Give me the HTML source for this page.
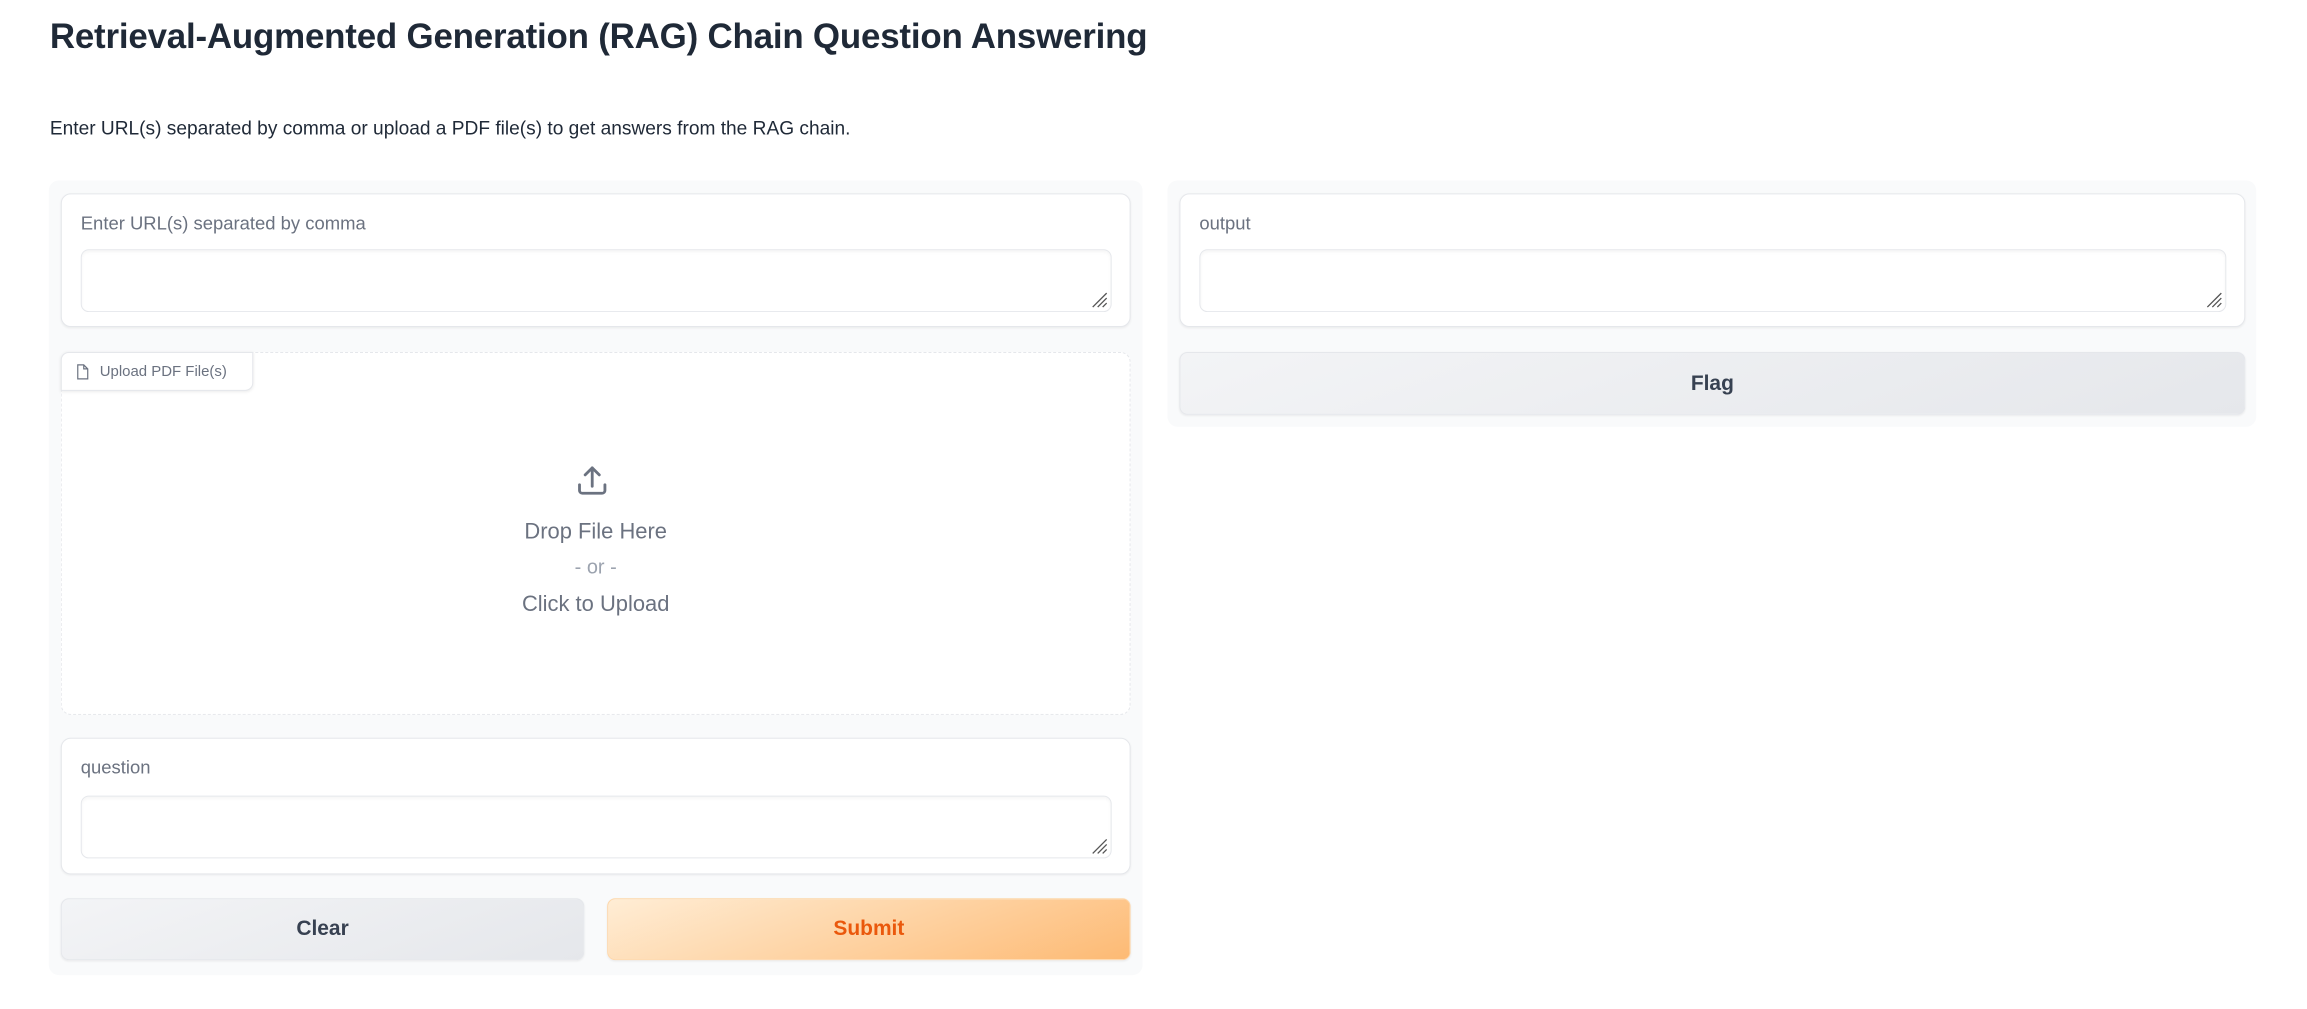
<!DOCTYPE html>
<html><head><meta charset="utf-8"><style>
*{box-sizing:border-box;margin:0;padding:0}
body{width:2307px;height:1009px;background:#fff;font-family:"Liberation Sans",sans-serif;position:relative;overflow:hidden}
#w{position:absolute;left:0;top:0;width:2307px;height:1009px;transform:scale(0.997);transform-origin:0 0}
.abs{position:absolute}
h1{position:absolute;left:50px;top:17px;font-size:35px;font-weight:bold;color:#1f2937;letter-spacing:-0.2px}
.desc{left:50px;top:119px;font-size:19.2px;color:#1f2937}
.panel{background:#f9fafb;border-radius:10px}
.block{background:#fff;border:1.5px solid #e5e7eb;border-radius:10px;box-shadow:0 1px 2px rgba(0,0,0,.05)}
.label{font-size:18.5px;color:#6b7280}
.ta{background:#fff;border:1.5px solid #e5e7eb;border-radius:8px;box-shadow:inset 0 2px 3px rgba(0,0,0,.04)}
.grip{position:absolute;right:3px;bottom:3px;width:18px;height:18px}
.btn{display:flex;align-items:center;justify-content:center;font-size:21px;font-weight:bold;border-radius:8px}
.sec{background:linear-gradient(160deg,#f3f4f6,#e5e7eb);color:#374151;border:1px solid #e5e7eb;box-shadow:0 1px 2px rgba(0,0,0,.06)}
.pri{background:linear-gradient(160deg,#ffedd5,#fdba74);color:#ea580c;border:1px solid #fed7aa;box-shadow:0 1px 2px rgba(0,0,0,.06)}
</style></head><body><div id="w">
<h1>Retrieval-Augmented Generation (RAG) Chain Question Answering</h1>
<div class="abs desc">Enter URL(s) separated by comma or upload a PDF file(s) to get answers from the RAG chain.</div>

<div class="abs panel" style="left:49px;top:181px;width:1097px;height:797px"></div>
<div class="abs block" style="left:61px;top:194px;width:1073px;height:134px"></div>
<div class="abs label" style="left:81px;top:213px">Enter URL(s) separated by comma</div>
<div class="abs ta" style="left:81px;top:250px;width:1034px;height:63px"><svg class="grip" viewBox="0 0 18 18"><path d="M17 3L3 17M17 8L8 17M17 13L13 17" stroke="#555" stroke-width="1.3"/></svg></div>

<div class="abs" style="left:61px;top:353px;width:1073px;height:364px;background:#fff;border:1.5px dashed #e5e7eb;border-radius:10px"></div>
<div class="abs" style="left:61px;top:353px;width:193px;height:39px;background:#fff;border:1px solid #e5e7eb;border-radius:8px 0 8px 0;box-shadow:0 1px 3px rgba(0,0,0,.08);font-size:15px;color:#6b7280;display:flex;align-items:center;padding-left:14px">
<svg width="14" height="16" viewBox="0 0 14 16" style="margin-right:10px"><path d="M2 1h6l4 4v10H2z M8 1v4h4" fill="none" stroke="#6b7280" stroke-width="1.2"/></svg>Upload PDF File(s)</div>
<svg class="abs" style="left:577px;top:465px" width="34" height="34" viewBox="0 0 24 24" fill="none" stroke="#6b7280" stroke-width="2" stroke-linecap="round" stroke-linejoin="round"><path d="M3 15v4a2 2 0 0 0 2 2h14a2 2 0 0 0 2-2v-4M12 3v13M7 8l5-5 5 5"/></svg>
<div class="abs" style="left:61px;width:1073px;top:520px;text-align:center;font-size:22px;color:#6b7280">Drop File Here</div>
<div class="abs" style="left:61px;width:1073px;top:558px;text-align:center;font-size:20px;color:#9ca3af">- or -</div>
<div class="abs" style="left:61px;width:1073px;top:593px;text-align:center;font-size:22px;color:#6b7280">Click to Upload</div>

<div class="abs block" style="left:61px;top:740px;width:1073px;height:137px"></div>
<div class="abs label" style="left:81px;top:759px">question</div>
<div class="abs ta" style="left:81px;top:798px;width:1034px;height:63px"><svg class="grip" viewBox="0 0 18 18"><path d="M17 3L3 17M17 8L8 17M17 13L13 17" stroke="#555" stroke-width="1.3"/></svg></div>

<div class="abs btn sec" style="left:61px;top:901px;width:525px;height:62px">Clear</div>
<div class="abs btn pri" style="left:609px;top:901px;width:525px;height:62px">Submit</div>

<div class="abs panel" style="left:1171px;top:181px;width:1092px;height:247px"></div>
<div class="abs block" style="left:1183px;top:194px;width:1069px;height:134px"></div>
<div class="abs label" style="left:1203px;top:213px">output</div>
<div class="abs ta" style="left:1203px;top:250px;width:1030px;height:63px"><svg class="grip" viewBox="0 0 18 18"><path d="M17 3L3 17M17 8L8 17M17 13L13 17" stroke="#555" stroke-width="1.3"/></svg></div>
<div class="abs btn sec" style="left:1183px;top:353px;width:1069px;height:63px">Flag</div>
</div></body></html>
